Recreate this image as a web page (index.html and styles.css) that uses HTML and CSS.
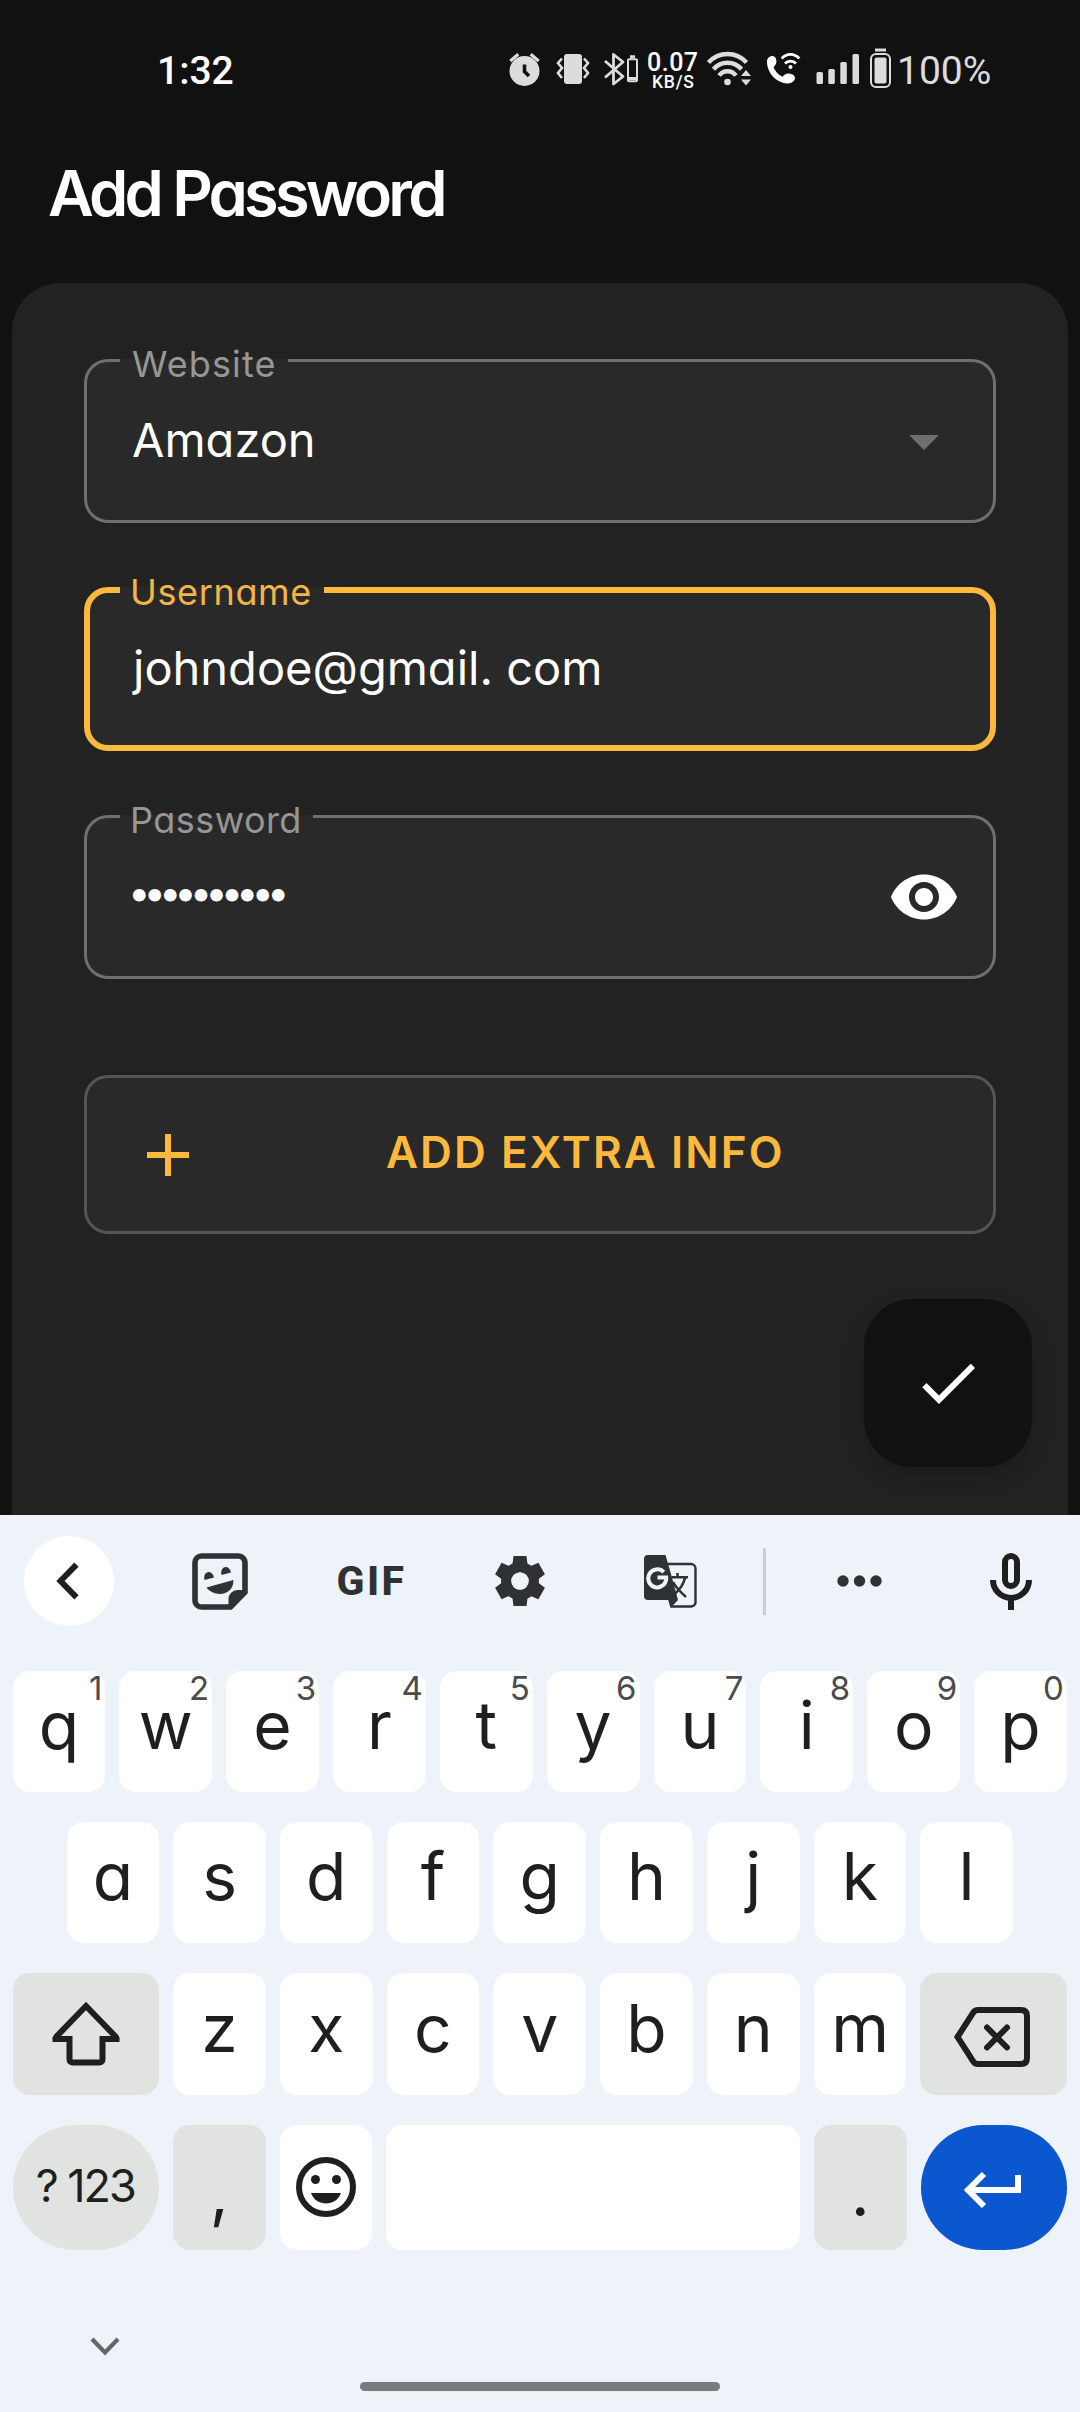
FILE: index.html
```html
<!DOCTYPE html>
<html lang="en">
<head>
<meta charset="utf-8">
<title>Add Password</title>
<link rel="stylesheet" href="styles.css">
</head>
<body>
<div class="screen">
  <header class="status">
    <span class="clock">1:32</span>
    <svg class="ic alarm" viewBox="508 50 32 40" width="32" height="40">
      <path d="M510.300 61l8-6.800M538.700 61l-8-6.800" stroke="#dcdcdc" stroke-width="3.200"/>
      <circle cx="524.500" cy="71" r="15" fill="#dcdcdc"/>
      <path d="M524.500 64.500V71.500l4.500 4.500" fill="none" stroke="#111" stroke-width="3.600"/>
    </svg>
    <svg class="ic vibrate" viewBox="556 50 34 40" width="34" height="40">
      <rect x="564" y="54" width="18" height="30" rx="3" fill="#dcdcdc"/>
      <path d="M562 58.500l-4 4.500 4 5-4 5 4 5M584 58.500l4 4.500-4 5 4 5-4 5" fill="none" stroke="#dcdcdc" stroke-width="2.600"/>
    </svg>
    <svg class="ic bt" viewBox="604 50 36 40" width="36" height="40">
      <path d="M605 61l18 15.500-9.500 7.500V54.500l9.500 7.500L605 77.500" fill="none" stroke="#dcdcdc" stroke-width="2.800" stroke-linejoin="round"/>
      <rect x="628" y="59.300" width="9" height="22" rx="1" fill="none" stroke="#dcdcdc" stroke-width="2"/>
      <path d="M630 56.800h5M628 78.500h9" stroke="#dcdcdc" stroke-width="3"/>
    </svg>
    <span class="net"><span class="rate">0.07</span><span class="unit">KB/S</span></span>
    <svg class="ic wifi" viewBox="706 50 46 40" width="46" height="40">
      <g fill="none" stroke="#dcdcdc" stroke-width="4.400">
        <path d="M708.500 62.500C719 51.200 736 51.200 746.500 62.500"/>
        <path d="M713.500 69.200C721 60.500 734 60.500 741.500 69.200"/>
        <path d="M719 75.500C723.500 69.800 731.500 69.800 736 75.500"/>
      </g>
      <circle cx="727.500" cy="82" r="3.300" fill="#dcdcdc"/>
      <path d="M741 76l5-6 5 6zM741 79.500h10l-5 6z" fill="#dcdcdc"/>
    </svg>
    <svg class="ic call" viewBox="766 50 35 40" width="35" height="40">
      <path d="M767 62c-.5-6 7-8 8.700-4 1.300 3.500 1 6-2.200 9.200 1.500 4 4.800 7.300 9 9.500 3-3.700 6-4 10-2.300 5 2.500 2 9.100-5.500 9C776 82.600 767.300 73 767 62z" fill="#fff"/>
      <g fill="none" stroke="#fff" stroke-width="2.700">
        <path d="M781.700 58.500c5-5.500 12.600-5.500 17.600 0"/>
        <path d="M785 63.500c3-3.300 8-3.300 11 0"/>
      </g>
      <circle cx="790.500" cy="67" r="2" fill="#fff"/>
    </svg>
    <svg class="ic signal" viewBox="816 50 44 40" width="44" height="40">
      <g fill="#dcdcdc"><rect x="816.500" y="72" width="6.500" height="12" rx="1.500"/><rect x="828.300" y="69" width="6.500" height="15" rx="1.500"/><rect x="840.300" y="62" width="6.500" height="22" rx="1.500"/><rect x="852.500" y="54" width="6.500" height="30" rx="1.500"/></g>
    </svg>
    <svg class="ic battery" viewBox="869 50 23 40" width="23" height="40">
      <path d="M875 50h11" stroke="#dcdcdc" stroke-width="3"/>
      <rect x="871" y="54" width="19" height="33" rx="5" fill="none" stroke="#dcdcdc" stroke-width="2"/>
      <rect x="874.500" y="57.500" width="12" height="26" rx="2" fill="#dcdcdc"/>
    </svg>
    <span class="pct">100%</span>
  </header>

  <h1 class="title">Add Password</h1>

  <main class="card">
    <div class="field website">
      <label class="label">Website</label>
      <span class="value">Amazon</span>
      <svg class="caret" viewBox="0 0 30 15" width="30" height="15"><path d="M0 0h30L15 15z" fill="#6f6f6f"/></svg>
    </div>
    <div class="field active">
      <label class="label">Username</label>
      <span class="value">johndoe@gmail. com</span>
    </div>
    <div class="field password">
      <label class="label">Password</label>
      <span class="value dots">••••••••••</span>
      <svg class="eye" viewBox="0 0 24 24" width="72" height="72"><path fill="#fff" d="M12 4.500C7 4.500 2.730 7.610 1 12c1.730 4.390 6 7.500 11 7.500s9.270-3.110 11-7.500c-1.730-4.390-6-7.500-11-7.500zM12 17c-2.760 0-5-2.240-5-5s2.240-5 5-5 5 2.240 5 5-2.240 5-5 5zm0-8c-1.660 0-3 1.340-3 3s1.340 3 3 3 3-1.340 3-3-1.340-3-3-3z"/></svg>
    </div>
    <button class="extra">
      <svg class="plus" viewBox="0 0 42 42" width="42" height="42"><path d="M21 0v42M0 21h42" stroke="#fdb93c" stroke-width="6"/></svg>
      <span class="extra-text">ADD EXTRA INFO</span>
    </button>
    <button class="fab"><svg viewBox="0 0 24 24" width="72" height="72"><path fill="#fff" d="M9 16.170L4.830 12l-1.420 1.410L9 19 21 7l-1.410-1.410z"/></svg></button>
  </main>

  <section class="keyboard">
    <div class="tools">
      <div class="tool first"><span class="back"><svg viewBox="0 0 90 90" width="90" height="90"><path d="M52.500 28.700L36.500 45l16 16.300" fill="none" stroke="#1f1f1f" stroke-width="6"/></svg></span></div>
      <div class="tool">
        <svg viewBox="0 0 56 57" width="56" height="57">
          <path d="M9.500 3h37a6.500 6.500 0 0 1 6.500 6.500V39L38.500 54h-29A6.500 6.500 0 0 1 3 47.500v-38A6.500 6.500 0 0 1 9.500 3z" fill="none" stroke="#2f3133" stroke-width="5.600"/>
          <path d="M36.500 55V46a9 9 0 0 1 9-9H55v3L39 56z" fill="#2f3133"/>
          <path d="M14.500 34.500L41.500 27c0 17-20 17-27 7.500zM12.500 27c-2-9.500 8-11 9.500-2.500zM29.500 22c-2-9.500 8-11 9.500-2.500z" fill="#2f3133"/>
        </svg>
      </div>
      <div class="tool gif">GIF</div>
      <div class="tool">
        <svg viewBox="-25 -25 50 50" width="50" height="50">
          <g fill="#2f3133">
            <path id="tooth" d="M-6.500-25h13l1.500 12H-8zM-6.500 25h13l1.500-12H-8z"/>
            <use href="#tooth" transform="rotate(60)"/>
            <use href="#tooth" transform="rotate(-60)"/>
          </g>
          <circle r="13.800" fill="none" stroke="#2f3133" stroke-width="10.400"/>
          <circle r="8.700" fill="#eef3fa"/>
        </svg>
      </div>
      <div class="tool">
        <svg viewBox="0 0 53 53" width="53" height="53">
          <path d="M22 9h25a4.500 4.500 0 0 1 4.500 4.500v34A4.500 4.500 0 0 1 47 51.500H27" fill="none" stroke="#2f3133" stroke-width="2.400"/>
          <path d="M4 0h17.500l5.500 19 7 26-7.500 8-2.300-8H4a4 4 0 0 1-4-4V4a4 4 0 0 1 4-4z" fill="#2f3133"/>
          <path d="M19.800 17.200A9 9 0 1 0 22.200 22.500H13.500" fill="none" stroke="#eef3fa" stroke-width="4"/>
          <path d="M27.500 22.300H44M33.500 18v4M41 23c-1.500 6-5 11.500-10.500 16M29 27c3 6 7.500 10 13 15" fill="none" stroke="#2f3133" stroke-width="2.600"/>
        </svg>
      </div>
      <div class="tool"><span class="divider"></span></div>
      <div class="tool"><svg viewBox="0 0 45 12" width="45" height="12"><g fill="#2f3133"><circle cx="6" cy="6" r="5.700"/><circle cx="22.500" cy="6" r="5.700"/><circle cx="39" cy="6" r="5.700"/></g></svg></div>
      <div class="tool mic"><svg viewBox="0 0 42 57" width="42" height="57"><rect x="15" y="3" width="12" height="30" rx="6" fill="none" stroke="#1f1f1f" stroke-width="6"/><path d="M3 27a18 18 0 0 0 36 0M21 45v12" fill="none" stroke="#1f1f1f" stroke-width="6"/></svg></div>
    </div>

    <div class="row">
      <div class="key">q<span class="hint">1</span></div><div class="key">w<span class="hint">2</span></div><div class="key">e<span class="hint">3</span></div><div class="key">r<span class="hint">4</span></div><div class="key">t<span class="hint">5</span></div><div class="key">y<span class="hint">6</span></div><div class="key">u<span class="hint">7</span></div><div class="key">i<span class="hint">8</span></div><div class="key">o<span class="hint">9</span></div><div class="key">p<span class="hint">0</span></div>
    </div>
    <div class="row home">
      <div class="key">a</div><div class="key">s</div><div class="key">d</div><div class="key">f</div><div class="key">g</div><div class="key">h</div><div class="key">j</div><div class="key">k</div><div class="key">l</div>
    </div>
    <div class="row third">
      <div class="key fn wide"><svg viewBox="52 2001 68 66" width="68" height="66"><path d="M86 2006l29.500 30.500c2 2.500 1 1.500 1 2.500h-14v20.500a3 3 0 0 1-3 3h-27a3 3 0 0 1-3-3V2039h-14c0-1-1 0 1-2.500z" fill="none" stroke="#1f1f1f" stroke-width="6"/></svg></div>
      <div class="key">z</div><div class="key">x</div><div class="key">c</div><div class="key">v</div><div class="key">b</div><div class="key">n</div><div class="key">m</div>
      <div class="key fn wide del"><svg viewBox="0 0 76 60" width="76" height="60"><path d="M3.500 30L19.500 5.200Q21 3 24 3H67q6 0 6 6v42q0 6-6 6H24q-3 0-4.500-2.200z" fill="none" stroke="#1f1f1f" stroke-width="6"/><path d="M33 20.500l20 20M53 20.500l-20 20" stroke="#1f1f1f" stroke-width="6" stroke-linecap="round"/></svg></div>
    </div>
    <div class="row last">
      <div class="key fn wide sym">? 123</div>
      <div class="key fn punct">,</div>
      <div class="key emoji"><svg viewBox="0 0 60 60" width="60" height="60"><circle cx="30" cy="30" r="27" fill="none" stroke="#1f1f1f" stroke-width="6"/><circle cx="19.500" cy="22.500" r="4.500" fill="#1f1f1f"/><circle cx="40.500" cy="22.500" r="4.500" fill="#1f1f1f"/><path d="M15 36h30c-5 14-25 14-30 0z" fill="#1f1f1f"/></svg></div>
      <div class="key space"></div>
      <div class="key fn punct">.</div>
      <div class="key wide enter"><svg viewBox="0 0 58 36" width="58" height="36"><path d="M54 3v15H6M20 2L4 18l16 16" fill="none" stroke="#fff" stroke-width="6"/></svg></div>
    </div>
    <div class="nav">
      <svg class="hide" viewBox="0 0 30 19" width="30" height="19"><path d="M2 2l13 13.500L28 2" fill="none" stroke="#666" stroke-width="4.200"/></svg>
      <span class="pill"></span>
    </div>
  </section>
</div>
</body>
</html>
```
FILE: styles.css
```css
* { box-sizing: border-box; }

body {
  margin: 0;
  background: #111;
  font-family: Inter, "Open Sans", sans-serif;
  font-feature-settings: "cv11";
}

svg { display: block; flex: none; }

button {
  margin: 0;
  padding: 0;
  font: inherit;
  font-feature-settings: inherit;
}

.screen {
  display: flex;
  flex-direction: column;
  width: 1080px;
  height: 2412px;
  overflow: hidden;
  background: #111;
}

/* Status bar */
.status {
  display: flex;
  align-items: center;
  height: 140px;
  padding: 0 80px 0 157px;
  font-family: Roboto, sans-serif;
  color: #fff;
}
.clock { width: 351px; padding-top: 2px; font-size: 39px; font-weight: 500; line-height: 46px; }
.vibrate { margin-left: 16px; }
.bt { margin-left: 14px; }
.net {
  display: flex;
  flex-direction: column;
  width: 53px;
  height: 40px;
  margin-left: 7px;
  font-weight: 500;
}
.rate { font-size: 25px; line-height: 25px; letter-spacing: .5px; }
.unit { padding-left: 5px; font-size: 17.5px; line-height: 14px; letter-spacing: .8px; }
.wifi { margin-left: 6px; }
.call { margin-left: 14px; }
.signal { margin-left: 15px; }
.battery { margin-left: 9px; overflow: visible; }
.pct { margin-left: 5px; padding-top: 2px; font-size: 39px; line-height: 46px; color: #dcdcdc; }

.title {
  height: 143px;
  margin: 0;
  padding: 15px 0 0 48px;
  font-size: 63px;
  font-weight: 570;
  line-height: 76px;
  letter-spacing: -3.8px;
  color: #fff;
}

/* Form card */
.card {
  position: relative;
  display: flex;
  flex-direction: column;
  gap: 64px;
  height: 1232px;
  margin: 0 12px;
  padding: 76px 72px 0;
  border-radius: 48px 48px 0 0;
  background: #222;
}
.field {
  position: relative;
  display: flex;
  align-items: center;
  justify-content: space-between;
  height: 164px;
  padding: 0 36px 2px 45px;
  border: 3px solid #6f6f6f;
  border-radius: 24px;
  background: #292929;
}
.label {
  position: absolute;
  top: -3px;
  left: 33px;
  width: 168px;
  height: 3px;
  padding-left: 12px;
  font-size: 36px;
  line-height: 10px;
  letter-spacing: 1.1px;
  color: #979696;
  background: #292929;
}
.value { font-size: 47px; line-height: 56px; color: #fff; }
.website { padding-right: 54px; }
.caret { margin-top: 5px; }
.active { border: 6px solid #fdb93c; padding-left: 43px; }
.active .label {
  top: -6px;
  left: 30px;
  width: 204px;
  height: 6px;
  padding-left: 10px;
  letter-spacing: .65px;
  color: #f3b546;
}
.password { padding: 0 33px 0 41px; }
.password .label { width: 193px; padding-left: 10px; letter-spacing: .45px; }
.dots { margin-bottom: 9px; font-size: 40px; letter-spacing: -7.06px; }
.extra {
  position: relative;
  display: flex;
  align-items: center;
  height: 159px;
  margin-top: 32px;
  padding: 0 0 0 60px;
  border: 3px solid #555;
  border-radius: 24px;
  background: #292929;
  color: #fdb93c;
}
.extra-text {
  margin: 0 0 5px 197px;
  font-size: 44px;
  font-weight: 570;
  line-height: 54px;
  letter-spacing: 2.1px;
  white-space: nowrap;
}
.fab {
  position: absolute;
  top: 1016px;
  right: 36px;
  display: flex;
  align-items: center;
  justify-content: center;
  width: 168px;
  height: 168px;
  border: 0;
  border-radius: 48px;
  background: #111;
  box-shadow: 0 9px 24px rgba(0, 0, 0, .22);
}

/* Keyboard */
.keyboard {
  position: relative;
  display: flex;
  flex-direction: column;
  height: 897px;
  background: #eef3fa;
  color: #1f1f1f;
}
.tools {
  display: grid;
  grid-template-columns: 145px repeat(4, 150px) 39px 150px 146px;
  height: 132px;
  margin-bottom: 24px;
}
.tool { display: flex; align-items: center; justify-content: center; }
.first { justify-content: flex-start; padding-left: 24px; }
.back { border-radius: 50%; background: #fff; }
.gif {
  padding-left: 3px;
  font: 800 41px/48px Roboto, sans-serif;
  letter-spacing: 2.5px;
  color: #2f3133;
}
.divider { width: 3px; height: 67px; background: #cacdd5; }
.mic { padding-left: 8px; }

.row { display: flex; gap: 14px; height: 121px; margin: 0 13px 30px 12.5px; }
.home { margin: 0 67px 30px 66.5px; }
.third { height: 122px; }
.last { height: 125px; margin-bottom: 0; }
.key {
  position: relative;
  display: flex;
  flex: 1 1 0;
  align-items: center;
  justify-content: center;
  padding-bottom: 13px;
  border-radius: 17px;
  background: #fff;
  font-size: 66px;
  line-height: 80px;
}
.fn { background: #e1e3e0; }
.wide { flex: 0 0 146.5px; padding-bottom: 0; }
.hint {
  position: absolute;
  top: 0;
  right: 3px;
  font-size: 33px;
  line-height: 34px;
  color: #4b4b4b;
}
.del { padding: 6px 3px 0 0; }
.sym {
  padding: 0 1px 4px 0;
  border-radius: 63px;
  font-size: 45px;
  letter-spacing: -2px;
}
.emoji { padding-bottom: 1px; }
.punct { padding: 9px 0 0; }
.emoji, .last .punct { flex: 0 0 92.500px; }
.enter { border-radius: 63px; background: #0b57d0; padding: 4px 2px 0 0; }

.nav { position: relative; flex: 1; padding: 87px 0 0 90px; }
.pill {
  position: absolute;
  left: 360px;
  bottom: 21px;
  width: 360px;
  height: 9px;
  border-radius: 5px;
  background: #797a7e;
}
```
